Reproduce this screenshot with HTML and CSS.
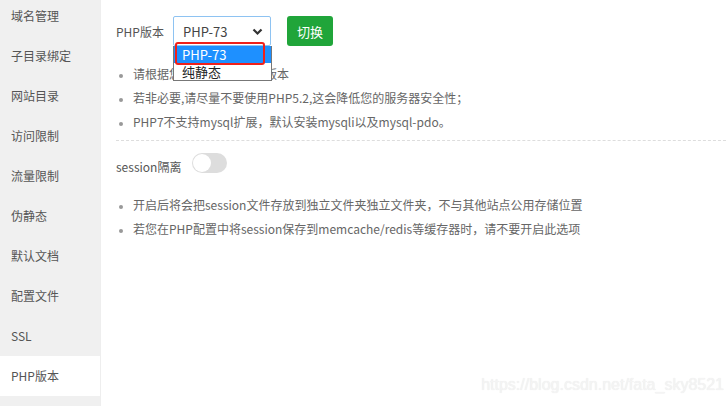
FILE: index.html
```html
<!DOCTYPE html>
<html lang="zh-CN">
<head>
  <meta charset="UTF-8">
  <title>PHP版本</title>
  <link rel="stylesheet" href="styles.css">
</head>
<body>

<div class="layout">
  <ul class="side-menu">
    <li>域名管理</li>
    <li>子目录绑定</li>
    <li>网站目录</li>
    <li>访问限制</li>
    <li>流量限制</li>
    <li>伪静态</li>
    <li>默认文档</li>
    <li>配置文件</li>
    <li>SSL</li>
    <li class="active">PHP版本</li>
    <li></li>
  </ul>

  <div class="content">
    <div class="php-row">
      <span class="label">PHP版本</span>
      <div class="select-wrap">
        <div class="fake-select">
          <span>PHP-73</span>
          <svg class="chevron" width="11" height="8" viewBox="0 0 11 8"><path d="M1.5 1.5 L5.5 5.5 L9.5 1.5" fill="none" stroke="#333" stroke-width="2.2"/></svg>
        </div>
        <ul class="options">
          <li class="selected">PHP-73</li>
          <li>纯静态</li>
        </ul>
        <div class="mark"></div>
      </div>
      <button class="btn-green">切换</button>
    </div>

    <ul class="tips">
      <li>请根据您的程序需求选择版本</li>
      <li>若非必要,请尽量不要使用PHP5.2,这会降低您的服务器安全性；</li>
      <li>PHP7不支持mysql扩展，默认安装mysqli以及mysql-pdo。</li>
    </ul>

    <div class="divider"></div>

    <div class="session-row">
      <span class="label">session隔离</span>
      <span class="switch"><span class="knob"></span></span>
    </div>

    <ul class="tips">
      <li>开启后将会把session文件存放到独立文件夹独立文件夹，不与其他站点公用存储位置</li>
      <li>若您在PHP配置中将session保存到memcache/redis等缓存器时，请不要开启此选项</li>
    </ul>

    <div class="watermark">https://blog.csdn.net/fata_sky8521</div>
  </div>
</div>

</body>
</html>
```

FILE: styles.css
```css
body {
  margin: 0;
  padding: 0;
  font-family: "Noto Sans CJK SC", "Noto Sans", sans-serif;
  font-size: 12px;
  color: #555;
  background-color: #fff;
  overflow: hidden;
}
.layout {
  display: flex;
  height: 406px;
  overflow: hidden;
}
.side-menu {
  list-style: none;
  margin: -4px 0 0 0;
  padding: 0;
  width: 100px;
  background-color: #f0f0f0;
  border-right: 1px solid #eee;
  flex-shrink: 0;
}
.side-menu li {
  height: 40px;
  line-height: 40px;
  padding-left: 11px;
  color: #555;
}
.side-menu li.active {
  background-color: #fff;
}
.content {
  flex: 1;
  padding: 16px 0 0 15px;
  position: relative;
}
.php-row {
  display: flex;
  align-items: center;
  height: 30px;
}
.php-row .label {
  width: 57px;
}
.select-wrap {
  position: relative;
}
.fake-select {
  width: 80px;
  height: 28px;
  border: 1px solid #8ec3f2;
  border-radius: 2px;
  display: flex;
  align-items: center;
  justify-content: space-between;
  padding: 0 7px 0 9px;
  font-size: 13px;
  color: #444;
}
.chevron {
  margin-top: 1px;
}
.options {
  position: absolute;
  top: 30px;
  left: 0;
  width: 97px;
  margin: 0;
  padding: 0;
  list-style: none;
  background-color: #fff;
  border: 1px solid #777;
  border-top: none;
  font-size: 13px;
  z-index: 2;
}
.options li {
  height: 17px;
  line-height: 17px;
  padding-left: 8px;
  color: #222;
}
.options li.selected {
  background-color: #1e90ff;
  color: #fff;
}
.mark {
  position: absolute;
  top: 26px;
  left: 2px;
  width: 86px;
  height: 19px;
  border: 2px solid #f0201a;
  border-radius: 3px;
  z-index: 3;
}
.btn-green {
  margin-left: 16px;
  width: 46px;
  height: 30px;
  border: none;
  border-radius: 3px;
  background-color: #20a53a;
  color: #fff;
  font-family: inherit;
  font-size: 13px;
  padding: 0;
}
.tips {
  margin: 16px 0 0 0;
  padding: 0;
  list-style: none;
}
.tips li {
  line-height: 24px;
  color: #666;
  white-space: nowrap;
}
.tips li::before {
  content: "";
  display: inline-block;
  width: 4px;
  height: 4px;
  border-radius: 50%;
  background-color: #999;
  margin: 0 10px 0 3px;
  vertical-align: middle;
}
.divider {
  border-top: 1px dashed #ddd;
  margin-top: 6px;
}
.session-row {
  display: flex;
  align-items: center;
  margin-top: 12px;
  height: 20px;
}
.session-row .label {
  margin-top: 6px;
  width: 76px;
}
.switch {
  display: inline-block;
  width: 35px;
  height: 20px;
  border-radius: 10px;
  background-color: #ddd;
  position: relative;
}
.knob {
  position: absolute;
  top: 1px;
  left: 1px;
  width: 18px;
  height: 18px;
  border-radius: 50%;
  background-color: #fff;
}
.session-row + .tips {
  margin-top: 20px;
}
.watermark {
  position: absolute;
  right: 2px;
  bottom: 12px;
  font-family: "Liberation Sans", Arial, sans-serif;
  font-size: 16px;
  color: #f4f4f4;
  text-shadow: 0 0 1px #e6e6e6;
}
```
